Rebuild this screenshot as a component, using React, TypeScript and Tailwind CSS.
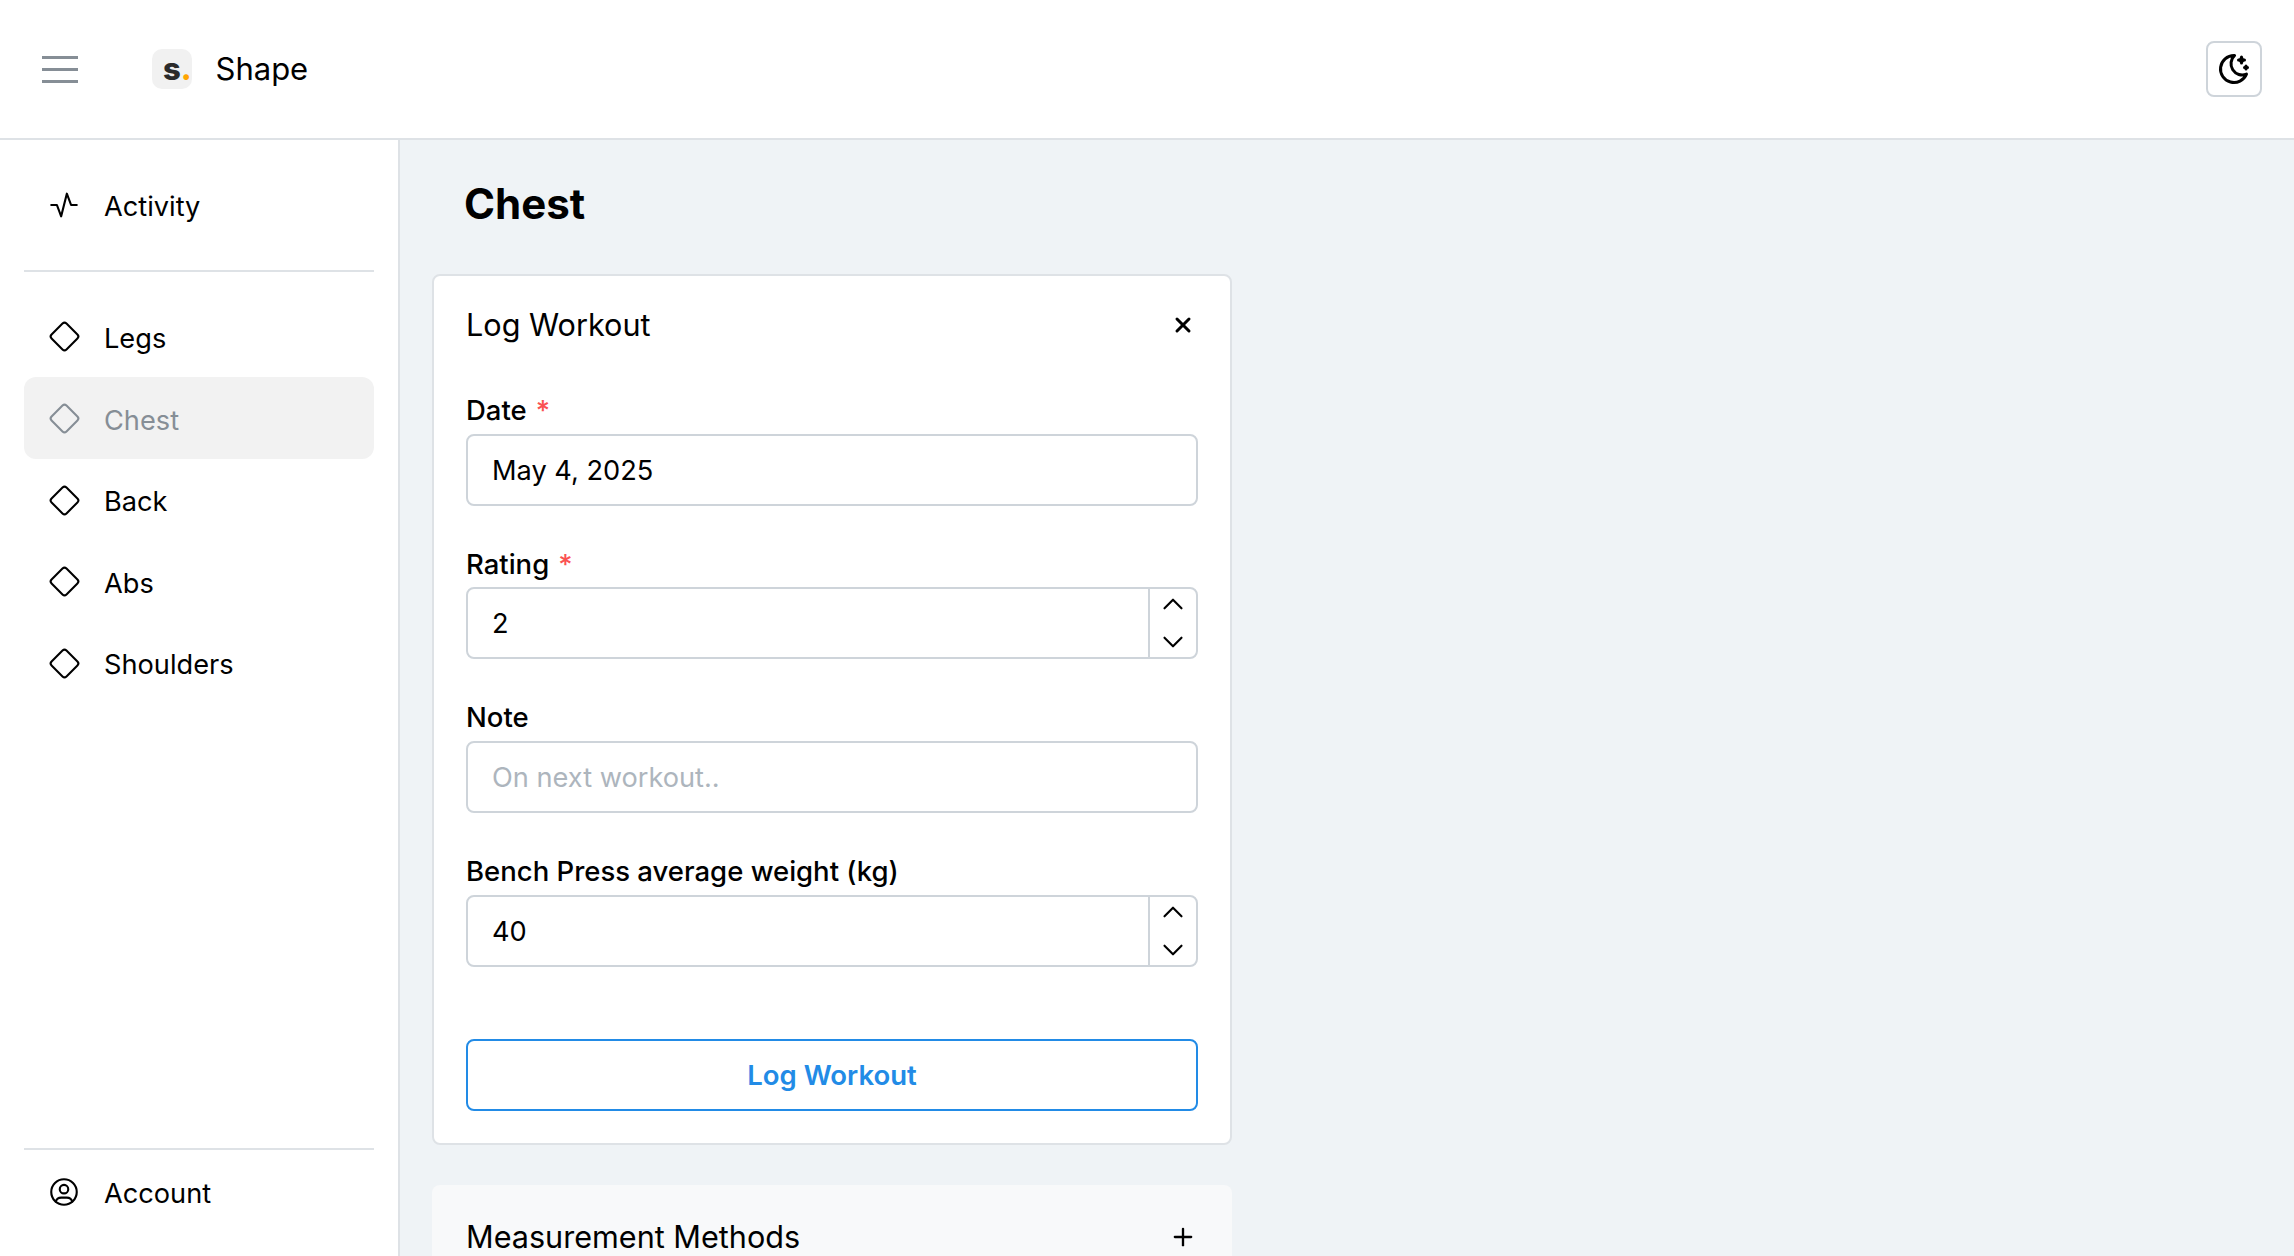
import { FC, ReactNode } from 'react';
import {
  TbActivity,
  TbChevronDown,
  TbChevronUp,
  TbMoonStars,
  TbPlus,
  TbSquareRotated,
  TbUserCircle,
  TbX,
} from 'react-icons/tb';

const font = { fontFamily: 'Inter, "Noto Sans", sans-serif' };

type NavItemProps = {
  icon: ReactNode;
  label: string;
  active?: boolean;
};

const NavItem: FC<NavItemProps> = ({ icon, label, active }) => (
  <a
    className={
      active
        ? 'flex h-[81.6px] items-center rounded-xl bg-[#f2f2f2] text-[#868e96]'
        : 'flex h-[81.6px] items-center rounded-xl text-black'
    }
  >
    <span className="flex w-[80px] shrink-0 items-center justify-center pt-[1px]">{icon}</span>
    <span className="pt-[6px] text-[27.2px]">{label}</span>
  </a>
);

type FieldProps = {
  label: string;
  required?: boolean;
  children: ReactNode;
};

const Field: FC<FieldProps> = ({ label, required, children }) => (
  <div>
    <label className="flex h-[46px] items-center gap-[9px] text-[27.5px] font-medium text-black">
      {label}
      {required && <span className="text-[#fa5252]">*</span>}
    </label>
    {children}
  </div>
);

const inputClass =
  'h-[72px] w-full rounded-lg border-2 border-[#ced4da] bg-white px-[24px] pt-[1px] text-[27.2px] text-black placeholder:text-[#adb5bd] focus:outline-none';

const NumberField: FC<{ value: string }> = ({ value }) => (
  <div className="flex h-[72px] w-full rounded-lg border-2 border-[#ced4da] bg-white">
    <input
      readOnly
      value={value}
      className="h-full min-w-0 flex-1 px-[24px] pt-[1px] text-[27.2px] text-black focus:outline-none"
    />
    <div className="flex w-[48px] flex-col items-center justify-center gap-1 border-l-2 border-[#ced4da]">
      <TbChevronUp className="h-[34px] w-[34px] shrink-0 stroke-[1.5]" />
      <TbChevronDown className="h-[34px] w-[34px] shrink-0 stroke-[1.5]" />
    </div>
  </div>
);

const App: FC = () => {
  return (
    <div className="flex h-screen flex-col overflow-hidden bg-white text-black" style={font}>
      <header className="flex h-[140px] shrink-0 items-center justify-between border-b-2 border-[#dee2e6] pl-[42px] pr-[32px]">
        <div className="flex items-center">
          <div className="flex w-[36px] flex-col gap-[9px]">
            <span className="h-[3px] bg-[#868e96]" />
            <span className="h-[3px] bg-[#868e96]" />
            <span className="h-[3px] bg-[#868e96]" />
          </div>
          <div className="ml-[74px] flex h-[40px] w-[40px] items-center rounded-[10px] bg-[#f1f1f1] pb-[1px] pl-[11px] text-[31px] font-extrabold leading-none text-[#2b2b2b]">
            s<span className="text-[#ffa500]">.</span>
          </div>
          <span className="ml-[23.5px] text-[31px]">Shape</span>
        </div>
        <button className="flex h-[56px] w-[56px] items-center justify-center rounded-lg border-2 border-[#ced4da]">
          <TbMoonStars className="h-[36px] w-[36px]" />
        </button>
      </header>

      <div className="flex min-h-0 flex-1">
        <aside className="flex w-[400px] shrink-0 flex-col border-r-2 border-[#dee2e6] p-6">
          <NavItem icon={<TbActivity className="h-[34px] w-[34px] stroke-[1.5]" />} label="Activity" />
          <div className="my-6 h-[2px] shrink-0 bg-[#dee2e6]" />
          <NavItem icon={<TbSquareRotated className="h-[33px] w-[33px] stroke-[1.5]" />} label="Legs" />
          <NavItem icon={<TbSquareRotated className="h-[33px] w-[33px] stroke-[1.5]" />} label="Chest" active />
          <NavItem icon={<TbSquareRotated className="h-[33px] w-[33px] stroke-[1.5]" />} label="Back" />
          <NavItem icon={<TbSquareRotated className="h-[33px] w-[33px] stroke-[1.5]" />} label="Abs" />
          <NavItem icon={<TbSquareRotated className="h-[33px] w-[33px] stroke-[1.5]" />} label="Shoulders" />
          <div className="mt-auto h-[2px] shrink-0 bg-[#dee2e6]" />
          <NavItem icon={<TbUserCircle className="h-[34px] w-[34px] stroke-[1.5]" />} label="Account" />
        </aside>

        <main className="min-w-0 flex-1 overflow-hidden bg-[#eff3f6] pl-[32px]">
          <h1 className="flex h-[134px] items-center pb-[8px] pl-[32px] text-[42px] font-bold text-black">
            Chest
          </h1>

          <section className="w-[800px] rounded-lg border-2 border-[#dee2e6] bg-white px-[32px] pb-[32px] pt-[32px]">
            <div className="mb-[46px] flex h-[34px] items-center justify-between">
              <h2 className="text-[30.6px]">Log Workout</h2>
              <TbX className="mr-[3px] h-[24px] w-[24px] stroke-[3]" />
            </div>

            <div className="flex flex-col gap-[35.3px]">
              <Field label="Date" required>
                <input readOnly value="May 4, 2025" className={inputClass} />
              </Field>
              <Field label="Rating" required>
                <NumberField value="2" />
              </Field>
              <Field label="Note">
                <input readOnly placeholder="On next workout.." className={inputClass} />
              </Field>
              <div className="mt-[1px]">
                <Field label="Bench Press average weight (kg)">
                  <NumberField value="40" />
                </Field>
              </div>
            </div>

            <button className="mt-[72px] h-[72px] w-full rounded-lg border-2 border-[#228be6] pt-[1px] text-[27.5px] font-semibold text-[#228be6]">
              Log Workout
            </button>
          </section>

          <section className="mt-[40px] w-[800px] rounded-lg bg-[#f8f9fa] pl-[34px] pr-[35px] pt-[35px]">
            <div className="flex h-[34px] items-center justify-between">
              <h2 className="text-[30.6px]">Measurement Methods</h2>
              <TbPlus className="h-[28px] w-[28px]" />
            </div>
            <div className="h-[34px]" />
          </section>
        </main>
      </div>
    </div>
  );
};

export default App;
